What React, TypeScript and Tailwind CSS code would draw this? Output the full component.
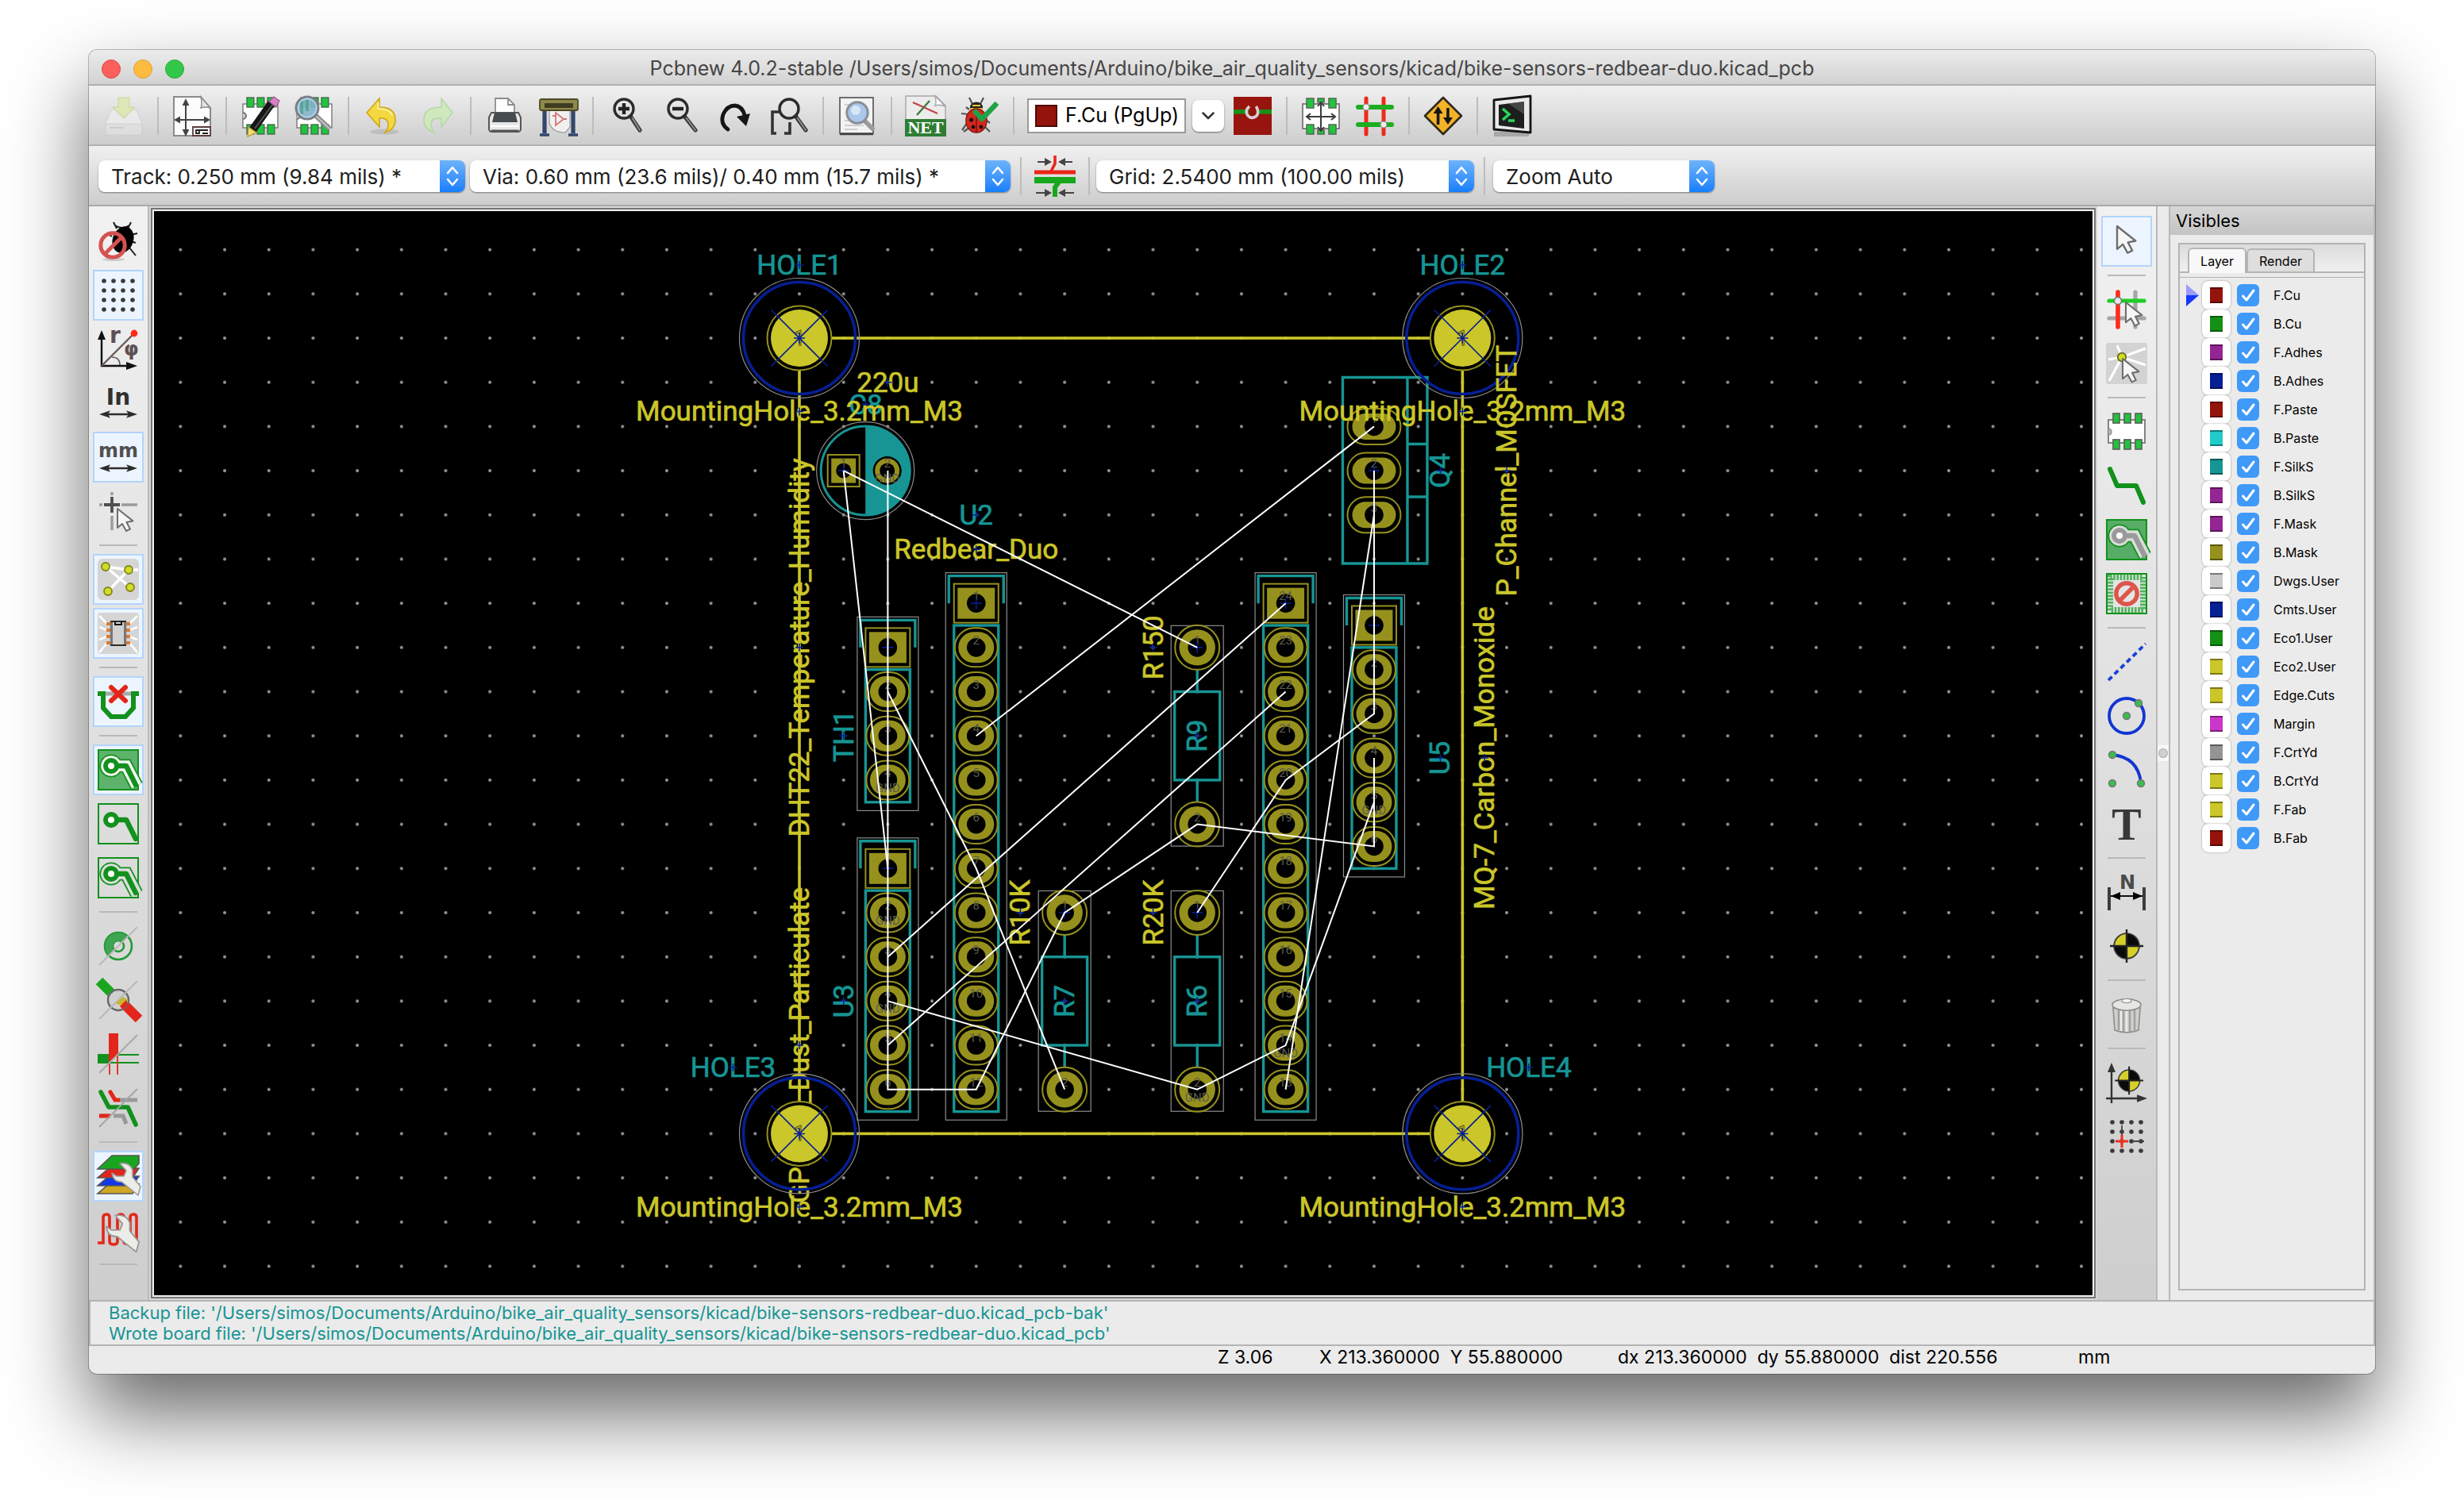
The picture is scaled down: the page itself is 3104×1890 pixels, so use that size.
import React from "react";

/* ------------------------------------------------------------------ */
/* Icons (26-unit grid)                                                 */
/* ------------------------------------------------------------------ */

function Icon({ children }: { children: React.ReactNode }) {
  return (
    <svg viewBox="0 0 26 26" className="size-13 shrink-0 overflow-visible" fill="none" aria-hidden="true">
      {children}
    </svg>
  );
}

const Magnifier = ({ cx = 9.5, cy = 8.5, r = 6, dx = 21 }: { cx?: number; cy?: number; r?: number; dx?: number }) => (
  <>
    <path d={`M${cx + r * 0.7} ${cy + r * 0.8}L${dx} 22`} stroke="#3a3a3a" strokeWidth="2.6" strokeLinecap="round" />
    <path d={`M${cx + r * 0.9} ${cy + r}L${dx} 22`} stroke="#8d8d8d" strokeWidth="1" strokeLinecap="round" />
    <circle cx={cx} cy={cy} r={r} stroke="#2c2c2c" strokeWidth="1.7" />
  </>
);

const BoardOutline = () => (
  <>
    <rect x="2" y="5.5" width="22" height="15" fill="#fff" stroke="#777" strokeWidth=".7" />
    <path d="M2 11a2 2 0 0 1 0 4" stroke="#777" fill="#ccc" />
    {[4.5, 11, 17.5].map((x) => (
      <g key={x} fill="#1fc43c" stroke="#466b4a" strokeWidth=".7">
        <rect x={x} y="1.5" width="4.4" height="6" />
        <rect x={x} y="18.5" width="4.4" height="6" />
      </g>
    ))}
  </>
);

const SaveIcon = () => (
  <Icon>
    <g opacity=".75">
      <path d="M5 9h16l3.500 9v6q0 1-1 1h-21q-1 0-1-1v-6z" fill="#eeeeee" stroke="#d2d2d2" strokeWidth=".6" />
      <path d="M1.500 18h23v6q0 1-1 1h-21q-1 0-1-1z" fill="#e2e2e2" stroke="#cdcdcd" strokeWidth=".6" />
      <path d="M4 20.500h9" stroke="#cacaca" />
      <path d="M9.500 1.500h7v6h3.500l-7 7-7-7h3.500z" fill="#dbe9a8" stroke="#c9d79a" strokeWidth=".7" />
    </g>
  </Icon>
);
const PageIcon = () => (
  <Icon>
    <path d="M1.500 1h17l6 7v17.500h-23z" fill="#fcfcfc" stroke="#8b8b8b" strokeWidth="1" />
    <path d="M18.500 1q1 5 0 7 3-1 6 0z" fill="#e3e3e3" stroke="#8b8b8b" strokeWidth=".7" />
    <path d="M9 4v20M3 15.500h20" stroke="#444" strokeWidth="1" />
    <path d="M9 2l-2.200 4.500h4.400zM9 26l-2.200-4.500h4.400zM1.500 15.500l4-2.200v4.400zM24.500 15.500l-4-2.200v4.400z" fill="#444" />
    <path d="M13.500 20h11v5.500h-11z" fill="#fff" stroke="#5b3c3c" strokeWidth=".9" />
    <path d="M15.500 22h2v2h-2zM19.500 22h3.500M19.500 24h3.500M17.500 22h2" stroke="#222" strokeWidth=".9" />
  </Icon>
);
const EditBoardIcon = () => (
  <Icon>
    <BoardOutline />
    <path d="M8 22L20 5" stroke="#161616" strokeWidth="5" />
    <path d="M9.500 21L21 5.500" stroke="#555" strokeWidth="1" />
    <path d="M18.500 4l3-3 3.500 2.500-2 4z" fill="#d97fc3" stroke="#9a5c8c" strokeWidth=".6" />
    <path d="M5.500 20l5 3.500-5.500 2.500z" fill="#f2dd74" stroke="#b59a2e" strokeWidth=".6" />
  </Icon>
);
const ViewBoardIcon = () => (
  <Icon>
    <BoardOutline />
    <path d="M14 13l8.500 8" stroke="#8d8d8d" strokeWidth="3.200" />
    <path d="M14 13l8.500 8" stroke="#c3c3c3" strokeWidth="1" />
    <circle cx="8.500" cy="8" r="7" fill="#7fb2c6" fillOpacity=".9" stroke="#7b7f86" strokeWidth="1.500" />
    <path d="M5 4v8M8.500 3v7" stroke="#4c9c86" strokeWidth="2" opacity=".7" />
    <circle cx="8.500" cy="8" r="5.800" stroke="#b7d7ef" strokeWidth=".8" />
  </Icon>
);
const UndoIcon = () => (
  <Icon>
    <ellipse cx="14" cy="23" rx="9" ry="1.800" fill="#000" opacity=".1" />
    <path d="M11 2v5.500q10 0 10 8 0 6-6.500 8 2.500-3 2-6-.8-3.500-5.500-3v5.500L3 11z" fill="#f3d83f" stroke="#cfa71c" strokeWidth=".8" />
    <path d="M10.200 4.500v4q7 0 9 4" stroke="#fbf0a4" strokeWidth="1" />
  </Icon>
);
const RedoIcon = () => (
  <Icon>
    <g transform="translate(26 0) scale(-1 1)" opacity=".8">
      <path d="M10 2v5.500q11 0 11 8 0 6-6.500 8 2.500-3 2-6-.8-3.500-6.500-3v5.500L3 11z" fill="#cdebb6" stroke="#acd79b" strokeWidth=".8" />
    </g>
  </Icon>
);
const PrintIcon = () => (
  <Icon>
    <path d="M7 12V2h8l4 4v6z" fill="#fdfdfd" stroke="#8d8d8d" strokeWidth=".9" />
    <path d="M15 2v4h4" stroke="#8d8d8d" strokeWidth=".9" />
    <path d="M4.500 11h17l1.500 3v7q0 2-2 2H5q-2 0-2-2v-7z" fill="#e7e7e7" stroke="#575757" />
    <path d="M6.500 11h13l1.500 6H5z" fill="#474c50" />
    <path d="M4 19.500h18" stroke="#fff" />
    <path d="M4.500 22.500h17" stroke="#555" strokeWidth="1.600" />
  </Icon>
);
const PlotIcon = () => (
  <Icon>
    <path d="M4 9v15M22 9v15" stroke="#33456b" strokeWidth="2.600" />
    <path d="M1 25h6M19 25h6" stroke="#33456b" strokeWidth="1.800" />
    <path d="M7 8h13v12l-3 3.500q-8 0-10-6z" fill="#f1f1f1" stroke="#a5a5a5" strokeWidth=".7" />
    <rect x="1" y="2.500" width="24" height="7" rx="1" fill="#8e8a4b" stroke="#4d4b24" strokeWidth=".9" />
    <rect x="4" y="5" width="18" height="3" fill="#3f3d20" />
    <path d="M11 11v8l5-4zM9 13h2M16 15h2" stroke="#d57474" strokeWidth=".9" />
  </Icon>
);
const ZoomInIcon = () => (
  <Icon>
    <Magnifier cx={11} />
    <path d="M11 5v7M7.500 8.500h7" stroke="#222" strokeWidth="2.200" />
  </Icon>
);
const ZoomOutIcon = () => (
  <Icon>
    <Magnifier cx={11} dx={22} />
    <path d="M7.500 8.500h7" stroke="#222" strokeWidth="2.200" />
  </Icon>
);
const RedrawIcon = () => (
  <Icon>
    <path d="M8.500 21.500Q3.500 18 5.500 12 8 6.500 13 6.500q4.500.5 6 6" stroke="#151515" strokeWidth="2.400" strokeLinecap="round" />
    <path d="M14 13.500l8.500-2-2.500 8z" fill="#151515" />
  </Icon>
);
const ZoomFitIcon = () => (
  <Icon>
    <path d="M5 24H2.500V10.500H8M10 24h3.500v-7" stroke="#333" strokeWidth="1.800" />
    <Magnifier cx={13} cy={8.5} r={6} dx={23.5} />
  </Icon>
);
const FindIcon = () => (
  <Icon>
    <rect x="2" y="1.500" width="21" height="22.500" fill="#f3f3f3" stroke="#6e6e6e" strokeWidth="1" />
    <path d="M2 24.500h21" stroke="#444" strokeWidth="1.200" />
    <path d="M5 6h4M5 16h3M5 19h12M5 21.500h8" stroke="#cfcfcf" />
    <path d="M17.500 16l5 5" stroke="#9b9b9b" strokeWidth="3" strokeLinecap="round" />
    <circle cx="13" cy="11" r="6.600" fill="#a9c8ea" stroke="#8a8f96" strokeWidth="1.500" />
    <circle cx="12" cy="9.500" r="3" fill="#e3effa" opacity=".8" />
  </Icon>
);
const NetIcon = () => (
  <Icon>
    <path d="M.5.500h19l6 6V25.500H.500z" fill="#ececec" stroke="#a6a6a6" strokeWidth=".7" />
    <path d="M19 .500q1 4 0 6 3-1 6.500.5z" fill="#fff" stroke="#a6a6a6" strokeWidth=".7" />
    <path d="M5 4.500l15.500 7" stroke="#c94545" strokeWidth="1.200" />
    <path d="M15.500 3.500L7.500 12.500" stroke="#3d7a3d" strokeWidth="1.200" />
    <rect x="0" y="15" width="26" height="11" fill="#2f7d34" />
    <text x="13" y="24" textAnchor="middle" fontSize="11" fontWeight="700" fill="#fff" fontFamily="'Liberation Serif', serif">NET</text>
  </Icon>
);
const BugCheckIcon = () => (
  <Icon>
    <path d="M9 6.500L6.500 1.500M13 6.500L15.500 1.500M6 12l-4.500-.5M5.500 17L2 22M7 20l-4 3M15.500 19l4 4M16.500 15l3 2.500M6.500 9L4.500 7.500" stroke="#555" strokeWidth="1.100" />
    <ellipse cx="11" cy="7.500" rx="4" ry="3.200" fill="#222" />
    <path d="M8.500 6.500h5M7.500 8.500h7" stroke="#e8c832" strokeWidth="1.100" />
    <ellipse cx="11" cy="16" rx="6.600" ry="7.600" fill="#d6261c" stroke="#7a1510" strokeWidth=".6" />
    <path d="M11 9v14.500" stroke="#571010" strokeWidth=".6" />
    <circle cx="7.800" cy="15.500" r="1.300" fill="#111" />
    <circle cx="9" cy="20" r="1.200" fill="#111" />
    <circle cx="14" cy="20" r="1.200" fill="#111" />
    <path d="M9.500 9.500l5 5.500L24 5" stroke="#1fa347" strokeWidth="3.200" strokeLinejoin="round" />
  </Icon>
);
const LayerPairIcon = () => (
  <Icon>
    <rect x="1" y="1" width="24" height="24" fill="#98140e" />
    <rect x="1" y="9" width="24" height="2.800" fill="#169218" />
    <circle cx="13" cy="10.500" r="2.600" fill="#98140e" />
    <path d="M11 7q-3 2.500-1.300 5.500 2.300 3 5.500.8 2.300-2.300 0-6.300" stroke="#dccbd2" strokeWidth="1.800" />
  </Icon>
);
const FootprintModeIcon = () => (
  <Icon>
    <rect x="1.500" y="5.500" width="23" height="15.500" fill="#fff" stroke="#777" strokeWidth=".9" />
    <g fill="#1fc43c" stroke="#5b6b5c" strokeWidth=".8">
      <rect x="4" y="2" width="4.500" height="6" />
      <rect x="11" y="2" width="4" height="2.500" />
      <rect x="18" y="2" width="4.500" height="6" />
      <rect x="4" y="18.500" width="4.500" height="6" />
      <rect x="11" y="22" width="4" height="2.500" />
      <rect x="18" y="18.500" width="4.500" height="6" />
    </g>
    <path d="M13 5v17M4 13.500h18M11 7l2-2.500L15 7M11 20l2 2.500 2-2.500M6.500 11.500L4 13.500l2.500 2M19.500 11.500l2.500 2-2.500 2" stroke="#3c3c3c" strokeWidth="1" />
  </Icon>
);
const TrackModeIcon = () => (
  <Icon>
    <path d="M7.500 2v22.500M18.500 2v22.500" stroke="#ee2a1c" strokeWidth="2.500" strokeLinecap="round" />
    <path d="M2.500 7.500h21M2.500 18.500h21" stroke="#1cae20" strokeWidth="3" strokeLinecap="round" />
    <circle cx="7.500" cy="7.500" r="2" fill="#eee" stroke="#888" strokeWidth=".6" />
    <circle cx="18.500" cy="18.500" r="2" fill="#eee" stroke="#888" strokeWidth=".6" />
  </Icon>
);
const AutorouteIcon = () => (
  <Icon>
    <path d="M13 1.500L24.500 13 13 24.500 1.500 13z" fill="#f4b22a" stroke="#2f2a1c" strokeWidth="1.300" strokeLinejoin="round" />
    <path d="M9.800 18.500v-9M16 8v8" stroke="#161616" strokeWidth="1.800" />
    <path d="M9.800 7l-3 4.500h6zM16 18.500l-3-4.500h6z" fill="#161616" />
  </Icon>
);
const ConsoleIcon = () => (
  <Icon>
    <path d="M2 23h22v3H2z" fill="#8c8c8c" opacity=".6" />
    <path d="M2 3L25 .500V23.500L2 21.500z" fill="#e9e9e9" stroke="#151515" strokeWidth="1.400" strokeLinejoin="round" />
    <path d="M5 6L21 4v17L5 19z" fill="#1c1f1e" />
    <path d="M11 5.300L21 4v8z" fill="#5d6361" opacity=".6" />
    <path d="M7.500 8.500l4 3.500-4 3.500M11 16h4" stroke="#2bd65a" strokeWidth="1.800" />
  </Icon>
);
const AutoTrackWidthIcon = () => (
  <Icon>
    <path d="M2 4h7M24 4h-7M1 23.500h8M25 23.500h-8" stroke="#444" strokeWidth="1" />
    <path d="M6.500 1.500l4.500 2.500-4.500 2.500zM19.500 1.500L15 4l4.500 2.500zM6.500 21l4.500 2.500L6.500 26zM19.500 21L15 23.500l4.500 2.500z" fill="#444" />
    <path d="M13 0v5l-2.500 5" stroke="#ea2517" strokeWidth="1.800" />
    <path d="M0 10.500h26" stroke="#ea2517" strokeWidth="2.400" />
    <path d="M0 15.500h26" stroke="#17a71d" strokeWidth="4" />
    <path d="M16 16l-3 4v6" stroke="#17a71d" strokeWidth="3" />
  </Icon>
);

/* left bar */
const DrcOffIcon = () => (
  <Icon>
    <path d="M12 5l-2-4M19 5l2-4M21 9l4-1M21 13l3 1M20 17l4 5M11 3q4 3 9 0M9 10l-3-2" stroke="#1c1c1c" strokeWidth="1" />
    <ellipse cx="16" cy="12" rx="6.500" ry="8.500" transform="rotate(20 16 12)" fill="#000" />
    <ellipse cx="10" cy="24.500" rx="7" ry="1" fill="#000" opacity=".15" />
    <circle cx="9.500" cy="15.500" r="7.600" stroke="#d65252" strokeWidth="2.500" />
    <path d="M4.500 21L15 10.500" stroke="#d65252" strokeWidth="2.500" />
  </Icon>
);
const GridDots = () => (
  <>
    {[4, 10, 16, 22].map((y) => [4, 10, 16, 22].map((x) => <circle key={`${x}-${y}`} cx={x} cy={y} r="1.400" fill="#3a3a3a" />))}
  </>
);
const GridIcon = () => <Icon><GridDots /></Icon>;
const PolarIcon = () => (
  <Icon>
    <path d="M2.500 4v19.500H21" stroke="#111" strokeWidth="1.200" />
    <path d="M2.500 1L0 7h5zM25 23.500L18 21v5z" fill="#111" />
    <path d="M2.500 23.500L22 4" stroke="#6a5a5a" strokeWidth="1.200" />
    <path d="M9 18q5 0 5 5" stroke="#6a5a5a" strokeWidth=".8" />
    <circle cx="23" cy="3" r="2.200" fill="#ff2a1c" />
    <text x="7.500" y="9" fontSize="14" fontWeight="700" fill="#5f5052" fontFamily="'DejaVu Sans', sans-serif">r</text>
    <text x="16.500" y="17" fontSize="12" fontWeight="700" fill="#5f5052" fontFamily="'DejaVu Sans', sans-serif">φ</text>
  </Icon>
);
const UnitArrow = () => (
  <>
    <path d="M4 20h18" stroke="#2c2c2c" strokeWidth="1.200" />
    <path d="M1 20l7-2.400-1.500 2.400L8 22.400zM25 20l-7-2.400 1.500 2.400-1.500 2.400z" fill="#2c2c2c" />
  </>
);
const InchIcon = () => (
  <Icon>
    <text x="13" y="14" textAnchor="middle" fontSize="14" fontWeight="700" fill="#303030" fontFamily="'DejaVu Sans', sans-serif">In</text>
    <UnitArrow />
  </Icon>
);
const MmIcon = () => (
  <Icon>
    <text x="13" y="13" textAnchor="middle" fontSize="12" fontWeight="700" fill="#505050" fontFamily="'DejaVu Sans', sans-serif">mm</text>
    <UnitArrow />
  </Icon>
);
const CursorArrow = ({ x = 12, y = 11, s = 1 }: { x?: number; y?: number; s?: number }) => (
  <path
    transform={`translate(${x} ${y}) scale(${s})`}
    d="M0 0v12l3-2.500 2.500 4.500 2.500-1.200-2.300-4.300 4-.8z"
    fill="#f6f6f6"
    stroke="#6e6e6e"
    strokeWidth="1"
    strokeLinejoin="round"
  />
);
const CursorShapeIcon = () => (
  <Icon>
    <path d="M1 9h2M15 9h10M9 1v2M9 16v9" stroke="#9b9b9b" strokeWidth="1.700" />
    <path d="M4 9h10M9 4v10" stroke="#505050" strokeWidth="1.900" />
    <CursorArrow x={12.5} y={11.5} />
  </Icon>
);
const RatsnestIcon = () => (
  <Icon>
    <rect width="26" height="26" rx="3" fill="#d5d5d5" />
    <path d="M5 5l15.500 13M5 5l14.500 2h6M6.500 20.500L19.500 7" stroke="#fff" strokeWidth="1.700" />
    {[[5, 5], [19.500, 7], [6.500, 20.500], [20.500, 18]].map(([x, y]) => (
      <circle key={x} cx={x} cy={y} r="2.500" fill="#d3dc27" stroke="#7f861b" strokeWidth=".9" />
    ))}
  </Icon>
);
const ModuleRatsnestIcon = () => (
  <Icon>
    <rect width="26" height="26" rx="2" fill="#d5d5d5" />
    <path d="M6 7L1 2M6 11L1 9M6 15l-5 2M6 19l-5 6M20 7l5-5M20 11l5-2M20 15l5 2M20 19l5 6" stroke="#fff" strokeWidth="1.300" />
    {[7, 11, 15, 19].map((y) => (
      <path key={y} d={`M5.500 ${y}h3M17.500 ${y}h3`} stroke="#e07a2c" strokeWidth="2" />
    ))}
    <rect x="8.500" y="5.500" width="9" height="15" fill="#d2d2d2" stroke="#2c2c2c" strokeWidth="1" />
    <path d="M8.700 6v14M17.300 6v14" stroke="#777" strokeWidth="1.600" />
    <path d="M11 5.500v2h4v-2" stroke="#111" />
  </Icon>
);
const AutoDelTrackIcon = () => (
  <Icon>
    <path d="M3 8h20" stroke="#aaa" strokeWidth="2.500" />
    <path d="M0 8h3.500v9l5 5.500h9l5-5.500V8H26" stroke="#12911c" strokeWidth="3" />
    <path d="M8.500 4l9 8.500M17.500 4l-9 8.500" stroke="#e3261b" strokeWidth="3" strokeLinecap="round" />
  </Icon>
);
const ZoneTrack = ({ halo, fill }: { halo?: string; fill: string }) => (
  <>
    {halo && (
      <>
        <path d="M9 10.500h9L24.500 23" stroke="#12911c" strokeWidth="8.600" />
        <circle cx="8.500" cy="10.500" r="7.300" fill="#12911c" />
        <path d="M9 10.500h9L24.500 23" stroke={halo} strokeWidth="6.800" />
        <circle cx="8.500" cy="10.500" r="6.400" fill={halo} />
      </>
    )}
    <path d="M9 10.500h9l6 12" stroke={fill} strokeWidth="3.200" strokeLinecap="round" strokeLinejoin="round" />
    <circle cx="8.500" cy="10.500" r="3.500" fill="#fff" stroke={fill} strokeWidth="3" />
  </>
);
const ZoneFrame = ({ bg }: { bg: string }) => <rect x=".5" y=".5" width="25" height="25" fill={bg} stroke="#12911c" strokeWidth="1" />;
const ZoneFilledIcon = () => <Icon><ZoneFrame bg="#5db36c" /><ZoneTrack halo="#f2f8f2" fill="#12911c" /></Icon>;
const ZoneHiddenIcon = () => <Icon><ZoneFrame bg="none" /><ZoneTrack fill="#12911c" /></Icon>;
const ZoneOutlineIcon = () => <Icon><ZoneFrame bg="none" /><ZoneTrack halo="#dedede" fill="#12911c" /></Icon>;
const Slash = ({ c = "#b9b9b9" }: { c?: string }) => <path d="M1 25L25 1" stroke={c} strokeWidth="1" />;
const PadSketchIcon = () => (
  <Icon>
    <circle cx="13" cy="13" r="8.500" stroke="#239a35" strokeWidth="1.300" />
    <circle cx="13" cy="13" r="3.500" stroke="#239a35" strokeWidth="1.300" />
    <path d="M7 19A8.500 8.500 0 0 1 19 7l-3.500 3.500a3.500 3.500 0 0 0-5 5z" fill="#3fa551" />
    <Slash />
  </Icon>
);
const ViaSketchIcon = () => (
  <Icon>
    <path d="M1 1l10 10" stroke="#1aa51f" strokeWidth="6" />
    <path d="M14 13l12 12" stroke="#e3261b" strokeWidth="6" />
    <circle cx="13" cy="13" r="6.500" fill="#d0d0d0" stroke="#686868" strokeWidth="1.200" />
    <path d="M11 15l5-4 3 2-3 4z" fill="#c8b72a" />
    <path d="M14 17l4-4 1 3-3 3z" fill="#e3261b" />
    <Slash />
  </Icon>
);
const TrackSketchIcon = () => (
  <Icon>
    <path d="M0 13.500h26M0 18.500h26" stroke="#12911c" strokeWidth="1" />
    <rect y="13" width="7" height="6" fill="#12911c" />
    <path d="M7.500 0v26M12.500 0v26" stroke="#e3372c" strokeWidth="1" />
    <path d="M7 0h6v13l-6 6z" fill="#e3261b" />
    <Slash c="#a9a9a9" />
  </Icon>
);
const HighContrastIcon = () => (
  <Icon>
    <path d="M8 3l3 5h3" stroke="#e3261b" strokeWidth="2.600" strokeLinecap="round" />
    <path d="M14 8h11M10 18h6l2 5" stroke="#999" strokeWidth="2.600" />
    <path d="M1 18h7" stroke="#e3261b" strokeWidth="2.600" />
    <path d="M2 3l5 9.500h12l5 11" stroke="#12911c" strokeWidth="2.800" strokeLinecap="round" strokeLinejoin="round" />
    <Slash c="#a5a5a5" />
  </Icon>
);
const Wrench = () => (
  <path
    d="M14 5q6-1 8 4v4.500l5 6-1.500 5.500-10.500-8.500q-5 .5-6-5.500l3 2h4.500l1.500-3.500z"
    fill="#ecece9"
    stroke="#9a9a96"
    strokeWidth=".8"
    strokeLinejoin="round"
  />
);
const LayerManagerIcon = () => (
  <Icon>
    <path d="M7 18L0 24h22l4-6z" fill="#d0a625" stroke="#555" strokeWidth=".8" />
    <path d="M7 13l-7 6h22l4-6z" fill="#1238e8" stroke="#555" strokeWidth=".8" />
    <path d="M7 8l-7 6h22l4-6z" fill="#e3261b" stroke="#555" strokeWidth=".8" />
    <path d="M9 0L0 8.500h23L26 5V0z" fill="#1aa51f" stroke="#555" strokeWidth=".8" />
    <Wrench />
  </Icon>
);
const MicrowaveIcon = () => (
  <Icon>
    <path d="M0 21h3.500V5q0-2 2-2t2 2v15q0 2 2.500 2t2.500-2V5q0-2 2-2t2 2v15q0 1.500 1.500 1.500T20.500 20V5q0-2 2-2t2 2v17" stroke="#e3261b" strokeWidth="1.800" />
    <g transform="translate(-5 -2) scale(1.150)"><Wrench /></g>
  </Icon>
);

/* right bar */
const ArrowIcon = () => <Icon><CursorArrow x={7} y={3.5} s={1.2} /></Icon>;
const HighlightNetIcon = () => (
  <Icon>
    <path d="M18.500 2v22M2 18.500h22" stroke="#a5a5a5" strokeWidth="2.600" strokeLinecap="round" />
    <path d="M7.500 2v22" stroke="#ff2a1c" strokeWidth="2.800" strokeLinecap="round" />
    <path d="M2 7.500h22" stroke="#1fce24" strokeWidth="2.600" strokeLinecap="round" />
    <circle cx="7.500" cy="7.500" r="2.300" fill="#e8e8e8" stroke="#777" strokeWidth=".8" />
    <CursorArrow x={12.5} y={8.5} s={1.05} />
  </Icon>
);
const LocalRatsnestIcon = () => (
  <Icon>
    <rect width="26" height="26" rx="1.500" fill="#d3d3d3" />
    <path d="M10 9L2 24M10 9L1.500 10.500M10 9L7 1.500M10 9l15-5.500M10 9l15 5" stroke="#fff" strokeWidth="1.600" />
    <circle cx="10" cy="9" r="2.600" fill="#d3dc27" stroke="#6f7620" />
    <CursorArrow x={10.5} y={10} s={1.05} />
  </Icon>
);
const AddFootprintIcon = () => (
  <Icon>
    <rect x="1.500" y="5.500" width="23" height="14.500" fill="#fff" stroke="#777" strokeWidth=".9" />
    <path d="M1.500 11q2 0 2 2t-2 2z" fill="#bbb" stroke="#888" strokeWidth=".6" />
    {[4.500, 11.500, 18.500].map((x) => (
      <g key={x} fill="#1fc43c" stroke="#5b6b5c" strokeWidth=".9">
        <rect x={x} y="1.500" width="4" height="6" />
        <rect x={x} y="18" width="4" height="6" />
      </g>
    ))}
  </Icon>
);
const AddTrackIcon = () => (
  <Icon>
    <path d="M2.500 2.500L7 13h12l4.500 10.500" stroke="#12911c" strokeWidth="3" strokeLinecap="round" strokeLinejoin="round" />
  </Icon>
);
const AddZoneIcon = () => <Icon><ZoneFrame bg="#57ad66" /><ZoneTrack halo="#dcdcdc" fill="#9a9a9a" /></Icon>;
const KeepoutIcon = () => (
  <Icon>
    <rect x="2.500" y="2.500" width="21" height="21" fill="#e4e4e4" stroke="#4fb35d" strokeWidth="4" strokeDasharray="1.300 .8" />
    <rect x=".5" y=".5" width="25" height="25" stroke="#12911c" />
    <circle cx="13" cy="13" r="6.600" stroke="#dc564c" strokeWidth="2.700" />
    <path d="M8.500 17.500l9-9" stroke="#dc564c" strokeWidth="2.700" />
  </Icon>
);
const DashedLineIcon = () => (
  <Icon>
    <path d="M1.500 24.500L25 1.500" stroke="#1b40d8" strokeWidth="1.900" strokeDasharray="3.200 2.200" />
  </Icon>
);
const Node = ({ x, y }: { x: number; y: number }) => <circle cx={x} cy={y} r="2.200" fill="#35c04a" stroke="#777" strokeWidth=".8" />;
const CircleIcon = () => (
  <Icon>
    <circle cx="13" cy="13" r="11" stroke="#1135d3" strokeWidth="1.900" />
    <Node x={13} y={13} />
    <Node x={20.5} y={5} />
  </Icon>
);
const ArcIcon = () => (
  <Icon>
    <path d="M4 3.500Q20 5 22 21" stroke="#1135d3" strokeWidth="1.900" />
    <Node x={4} y={3.5} />
    <Node x={4} y={21.5} />
    <Node x={22} y={21.5} />
  </Icon>
);
const TextIcon = () => (
  <Icon>
    <text x="13" y="23" textAnchor="middle" fontSize="28" fontWeight="700" fill="#383838" fontFamily="'Liberation Serif', serif">T</text>
  </Icon>
);
const DimensionIcon = () => (
  <Icon>
    <path d="M2 10v14.500M24 10v14.500" stroke="#3c3c3c" strokeWidth="2" />
    <path d="M3 15.500h20" stroke="#111" />
    <path d="M3 15.500l6-2.500v5zM23 15.500L17 13v5z" fill="#000" />
    <text x="13.500" y="11" textAnchor="middle" fontSize="12" fontWeight="700" fill="#4a4a4a" fontFamily="'DejaVu Sans', sans-serif">N</text>
  </Icon>
);
const TargetShape = () => (
  <>
    <circle cx="13" cy="13" r="8" fill="#0a0a0a" stroke="#444" strokeWidth=".8" />
    <path d="M13 13H5.500A7.500 7.500 0 0 1 13 5.500zM13 13h7.500A7.500 7.500 0 0 1 13 20.500z" fill="#d6cf2a" />
    <path d="M13 2.500v21M2.500 13h21" stroke="#222" strokeWidth="1.200" />
  </>
);
const TargetIcon = () => <Icon><TargetShape /></Icon>;
const TrashIcon = () => (
  <Icon>
    <path d="M4.500 9l1 14q7.500 3 15 0l1-14z" fill="#cfd0cd" stroke="#8c8d89" strokeWidth=".8" />
    <path d="M8 10v13M11 11v13M15 11v13M18 10v13" stroke="#a1a29e" strokeWidth="1.200" />
    <path d="M9.500 10.500v13M13 11v13" stroke="#eeeeec" />
    <ellipse cx="13" cy="7" rx="9" ry="3.600" fill="#e6e7e4" stroke="#8c8d89" strokeWidth=".8" />
    <ellipse cx="13" cy="4.500" rx="3" ry="1.300" fill="#f8f8f8" stroke="#979893" strokeWidth=".7" />
  </Icon>
);
const OriginIcon = () => (
  <Icon>
    <path d="M3.500 4v22M0 23h21" stroke="#333" strokeWidth="1.200" />
    <path d="M3.500.500L1 6.500h5zM26 23l-6.500-2.400v4.800z" fill="#333" />
    <g transform="translate(3.500 .7) scale(.85)"><TargetShape /></g>
  </Icon>
);
const GridOriginIcon = () => (
  <Icon>
    <GridDots />
    <path d="M10 6v14M16 16h8" stroke="#444" strokeWidth=".9" />
    <path d="M10 12v8M6 16h8" stroke="#ee3226" strokeWidth="1.600" />
  </Icon>
);

/* ------------------------------------------------------------------ */
/* Toolbars                                                             */
/* ------------------------------------------------------------------ */

type Tool = { label: string; icon: () => React.JSX.Element; on?: boolean };
type Group = Tool[];

function ToolButton({ label, icon: I, on }: Tool) {
  return (
    <button
      type="button"
      aria-label={label}
      title={label}
      className={
        on
          ? "m-0.5 flex size-16 shrink-0 items-center justify-center border-2 border-[#b3d4fb] bg-[#ecf5ff]"
          : "m-0.5 flex size-16 shrink-0 items-center justify-center border-2 border-transparent"
      }
    >
      <I />
    </button>
  );
}

const VSep = () => <div className="mx-2 h-12 w-0.5 shrink-0 bg-[#bdbdbd]" />;
const HSep = () => <div className="my-2 h-0.5 w-12 shrink-0 bg-[#b9b9b9]" />;

function Groups({ groups, vertical }: { groups: Group[]; vertical?: boolean }) {
  return (
    <>
      {groups.map((g, i) => (
        <React.Fragment key={i}>
          {i > 0 && (vertical ? <HSep /> : <VSep />)}
          {g.map((t) => (
            <ToolButton key={t.label} {...t} />
          ))}
        </React.Fragment>
      ))}
    </>
  );
}

const mainGroups: Group[] = [
  [{ label: "Save board", icon: SaveIcon }],
  [{ label: "Page settings", icon: PageIcon }],
  [{ label: "Open footprint editor", icon: EditBoardIcon }, { label: "Open footprint viewer", icon: ViewBoardIcon }],
  [{ label: "Undo", icon: UndoIcon }, { label: "Redo", icon: RedoIcon }],
  [{ label: "Print board", icon: PrintIcon }, { label: "Plot", icon: PlotIcon }],
  [
    { label: "Zoom in", icon: ZoomInIcon },
    { label: "Zoom out", icon: ZoomOutIcon },
    { label: "Redraw view", icon: RedrawIcon },
    { label: "Zoom auto", icon: ZoomFitIcon },
  ],
  [{ label: "Find", icon: FindIcon }],
  [{ label: "Read netlist", icon: NetIcon }, { label: "Design rules check", icon: BugCheckIcon }],
];

const modeGroups: Group[] = [
  [{ label: "Select layer pair", icon: LayerPairIcon }],
  [{ label: "Footprint mode", icon: FootprintModeIcon }, { label: "Track mode", icon: TrackModeIcon }],
  [{ label: "FreeRoute", icon: AutorouteIcon }],
  [{ label: "Scripting console", icon: ConsoleIcon }],
];

const leftGroups: Group[] = [
  [
    { label: "Enable design rule checking", icon: DrcOffIcon },
    { label: "Hide grid", icon: GridIcon, on: true },
    { label: "Polar coordinates", icon: PolarIcon },
    { label: "Units in inches", icon: InchIcon },
    { label: "Units in millimeters", icon: MmIcon, on: true },
    { label: "Change cursor shape", icon: CursorShapeIcon },
  ],
  [
    { label: "Show board ratsnest", icon: RatsnestIcon, on: true },
    { label: "Show footprint ratsnest", icon: ModuleRatsnestIcon, on: true },
  ],
  [{ label: "Automatic track deletion", icon: AutoDelTrackIcon, on: true }],
  [
    { label: "Show filled areas", icon: ZoneFilledIcon, on: true },
    { label: "Hide filled areas", icon: ZoneHiddenIcon },
    { label: "Show outlines of filled areas", icon: ZoneOutlineIcon },
  ],
  [
    { label: "Pads in outline mode", icon: PadSketchIcon },
    { label: "Vias in outline mode", icon: ViaSketchIcon },
    { label: "Tracks in outline mode", icon: TrackSketchIcon },
    { label: "High contrast mode", icon: HighContrastIcon },
  ],
  [
    { label: "Layers manager", icon: LayerManagerIcon, on: true },
    { label: "Microwave tools", icon: MicrowaveIcon },
  ],
  [],
];

const rightGroups: Group[] = [
  [{ label: "Select", icon: ArrowIcon, on: true }],
  [{ label: "Highlight net", icon: HighlightNetIcon }, { label: "Local ratsnest", icon: LocalRatsnestIcon }],
  [
    { label: "Add footprints", icon: AddFootprintIcon },
    { label: "Add tracks and vias", icon: AddTrackIcon },
    { label: "Add filled zones", icon: AddZoneIcon },
    { label: "Add keepout areas", icon: KeepoutIcon },
  ],
  [
    { label: "Add graphic line", icon: DashedLineIcon },
    { label: "Add graphic circle", icon: CircleIcon },
    { label: "Add graphic arc", icon: ArcIcon },
    { label: "Add text", icon: TextIcon },
  ],
  [{ label: "Add dimension", icon: DimensionIcon }, { label: "Add layer alignment target", icon: TargetIcon }],
  [{ label: "Delete items", icon: TrashIcon }],
  [{ label: "Set drill origin", icon: OriginIcon }, { label: "Set grid origin", icon: GridOriginIcon }],
];

function PopUp({ label, value, className }: { label: string; value: string; className: string }) {
  return (
    <div className={`relative h-10 shrink-0 ${className}`}>
      <select
        aria-label={label}
        className="h-10 w-full appearance-none rounded-lg bg-white pl-4 text-[26px] text-[#1d1d1d] shadow-[0_1px_2px_rgba(0,0,0,0.45)]"
      >
        <option>{value}</option>
      </select>
      <div className="pointer-events-none absolute inset-y-0 right-0 flex w-8 items-center justify-center rounded-r-lg bg-linear-to-b from-[#6cb3fa] to-[#157efb]">
        <svg viewBox="0 0 16 28" className="h-7 w-4" fill="none" stroke="#fff" strokeWidth="2.500" strokeLinecap="round" strokeLinejoin="round" aria-hidden="true">
          <path d="M2 10l6-7 6 7M2 18l6 7 6-7" />
        </svg>
      </div>
    </div>
  );
}

/* ------------------------------------------------------------------ */
/* Board                                                                */
/* ------------------------------------------------------------------ */

const U = 55.69;
const EDGE = "#cbc629";
const PAD = "#96911c";
const SILK = "#169594";
const BLUE = "#051f94";
const CRTYD = "#8c8c8c";

function Cross({ x, y, r = 5 }: { x: number; y: number; r?: number }) {
  return <path d={`M${x - r} ${y}h${2 * r}M${x} ${y - r}v${2 * r}`} stroke={BLUE} strokeWidth="1.500" />;
}

function Label({ x, y, text, color, vertical }: { x: number; y: number; text: string; color: string; vertical?: boolean }) {
  const px = x * U;
  const py = y * U;
  return (
    <g>
      <text
        x={px}
        y={py + 12}
        textAnchor="middle"
        fontSize="35"
        fill={color}
        stroke={color}
        strokeWidth=".7"
        transform={vertical ? `rotate(-90 ${px} ${py})` : undefined}
      >
        {text}
      </text>
      <Cross x={px} y={py} />
    </g>
  );
}

function PadText({ x, y, name, net }: { x: number; y: number; name: string; net?: string }) {
  return (
    <g fontSize="15" fill="#5c5b4e" textAnchor="middle">
      <text x={x} y={y - 4}>{name}</text>
      {net && <text x={x} y={y + 15}>{net}</text>}
    </g>
  );
}

function Hole({ x, y }: { x: number; y: number }) {
  return (
    <g transform={`translate(${x * U} ${y * U})`} fill="none">
      <circle r="75.500" stroke={CRTYD} strokeWidth="1.200" />
      <circle r="70.500" stroke={BLUE} strokeWidth="3.600" />
      <circle r="40.500" stroke={PAD} strokeWidth="2" fill="#000" />
      <circle r="36" fill={EDGE} />
      <text y="9" textAnchor="middle" fontSize="25" stroke="#55531c" strokeWidth="1">1</text>
      <path d="M-35.500-35.500l71 71M35.500-35.500l-71 71" stroke={BLUE} strokeWidth="1.700" />
      <Cross x={0} y={0} r={7} />
    </g>
  );
}

function Header({ x, y, names, nets = {} }: { x: number; y: number; names: string[]; nets?: Record<number, string> }) {
  const n = names.length;
  return (
    <g transform={`translate(${x * U} ${y * U})`} fill="none">
      <rect x="-38.500" y="-38.500" width="77" height={(n - 1) * U + 77} stroke={CRTYD} strokeWidth="1.200" />
      <path d="M-34.500 0v-34.500h69V0" stroke={SILK} strokeWidth="3.400" />
      <rect x="-28" y={U / 2} width="56" height={(n - 1) * U} stroke={SILK} strokeWidth="3.400" />
      {names.map((name, i) => (
        <g key={name}>
          {i === 0 ? (
            <>
              <rect x="-28" y="-24.500" width="56" height="49" stroke={PAD} strokeWidth="2" />
              <rect x="-23.500" y="-19.500" width="47" height="39" fill={PAD} />
            </>
          ) : (
            <>
              <rect x="-27" y={i * U - 24.5} width="54" height="49" rx="24.500" stroke={PAD} strokeWidth="2" />
              <rect x="-22.500" y={i * U - 19.5} width="45" height="39" rx="19.500" fill={PAD} />
            </>
          )}
          <circle cy={i * U} r="11.800" fill="#000" />
          <PadText x={0} y={i * U} name={name} net={nets[i]} />
        </g>
      ))}
      <Cross x={0} y={0} r={7} />
    </g>
  );
}

function Resistor({ x, y, net }: { x: number; y: number; net?: string }) {
  return (
    <g transform={`translate(${x * U} ${y * U})`} fill="none">
      <rect x="-33" y="-27.500" width="66" height={4 * U + 55} stroke={CRTYD} strokeWidth="1.200" />
      <rect x="-28.500" y={U} width="57" height={2 * U} stroke={SILK} strokeWidth="3.400" />
      <path d={`M0 28V${U}M0 ${3 * U}V${4 * U - 28}`} stroke={SILK} strokeWidth="3.400" />
      {[0, 4].map((k) => (
        <g key={k}>
          <circle cy={k * U} r="28" stroke={PAD} strokeWidth="2" />
          <circle cy={k * U} r="22.700" fill={PAD} />
          <circle cy={k * U} r="11.800" fill="#000" />
          <PadText x={0} y={k * U} name={k === 0 ? "1" : "2"} net={k === 4 ? net : undefined} />
        </g>
      ))}
      <Cross x={0} y={0} r={7} />
    </g>
  );
}

function Mosfet({ x, y }: { x: number; y: number }) {
  return (
    <g transform={`translate(${x * U} ${y * U})`} fill="none">
      <path d="M-39.500-117.500h106.500v234.500H-39.500zM42-117.500v234.500M42-33.500h25M42 33h25" stroke={SILK} strokeWidth="3.400" />
      {[-1, 0, 1].map((k) => (
        <g key={k}>
          <rect x="-33.500" y={k * U - 22.5} width="67" height="45" rx="22.500" stroke={PAD} strokeWidth="2" />
          <rect x="-27.500" y={k * U - 16.5} width="55" height="33" rx="16.500" fill={PAD} />
          <circle cy={k * U} r="11.800" fill="#000" />
          <PadText x={0} y={k * U} name={String(k + 2)} />
        </g>
      ))}
      <Cross x={0} y={0} r={7} />
    </g>
  );
}

function Capacitor({ x, y }: { x: number; y: number }) {
  return (
    <g transform={`translate(${x * U} ${y * U})`} fill="none">
      <circle cx="27.500" r="61.500" stroke={CRTYD} strokeWidth="1.200" />
      <path d="M27.500-57a57 57 0 0 1 0 114z" fill={SILK} />
      <circle cx="27.500" r="56" stroke={SILK} strokeWidth="3" />
      <rect x="-20" y="-20" width="40" height="40" stroke={PAD} strokeWidth="2" />
      <rect x="-15.500" y="-15.500" width="31" height="31" fill={PAD} />
      <circle r="9.500" fill="#000" />
      <circle cx="55" r="18" fill="#000" />
      <circle cx="55" r="15.500" fill={PAD} />
      <circle cx="55" r="9.500" fill="#000" />
      <PadText x={0} y={0} name="1" />
      <PadText x={55} y={0} name="2" net="GND" />
      <Cross x={0} y={0} r={7} />
    </g>
  );
}

const ratsnest: [number, number][][] = [
  [[1, 3], [9, 7]],
  [[1, 3], [2, 12]],
  [[2, 3], [2, 17], [4, 17], [6, 13], [9, 11], [13, 11.5], [13, 9.5]],
  [[2, 8], [4, 12], [6, 17]],
  [[4, 9], [13, 2]],
  [[2, 14], [11, 6]],
  [[2, 16], [11, 8]],
  [[2, 15], [9, 17], [11, 16], [13, 10.5]],
  [[9, 13], [11, 10], [13, 8.5], [13, 3]],
  [[13, 4], [11, 17]],
];

const seq = (from: number, to: number) =>
  Array.from({ length: Math.abs(to - from) + 1 }, (_, i) => String(from + (to > from ? i : -i)));

function Board() {
  return (
    <svg
      viewBox="-813 -160 2442 1366"
      preserveAspectRatio="xMidYMid slice"
      className="absolute inset-0 size-full bg-black font-[Roboto,sans-serif]"
      role="img"
      aria-label="Board layout"
    >
      <defs>
        <pattern id="grid-dots" x={-U / 2} y={-U / 2} width={U} height={U} patternUnits="userSpaceOnUse">
          <circle cx={U / 2} cy={U / 2} r="2" fill="#9a9a9a" />
        </pattern>
      </defs>
      <rect x="-1500" y="-1500" width="4500" height="4500" fill="url(#grid-dots)" />

      <Header x={4} y={6} names={seq(1, 12)} />
      <Header x={11} y={6} names={seq(24, 13)} nets={{ 10: "GND" }} />
      <Header x={2} y={7} names={seq(1, 4)} nets={{ 3: "GND" }} />
      <Header x={2} y={12} names={seq(1, 6)} nets={{ 1: "GND", 3: "GND" }} />
      <Header x={13} y={6.5} names={seq(1, 6)} nets={{ 4: "GND" }} />
      <Resistor x={9} y={7} />
      <Resistor x={9} y={13} net="GND" />
      <Resistor x={6} y={13} />
      <Capacitor x={1} y={3} />
      <Mosfet x={13} y={3} />

      <rect width={15 * U} height={18 * U} fill="none" stroke={EDGE} strokeWidth="3.600" />

      <Label x={0} y={-1.65} text="HOLE1" color={SILK} />
      <Label x={15} y={-1.65} text="HOLE2" color={SILK} />
      <Label x={-1.5} y={16.5} text="HOLE3" color={SILK} />
      <Label x={16.5} y={16.5} text="HOLE4" color={SILK} />
      <Label x={1.5} y={1.5} text="C8" color={SILK} />
      <Label x={4} y={4} text="U2" color={SILK} />
      <Label x={1} y={9} text="TH1" color={SILK} vertical />
      <Label x={1} y={15} text="U3" color={SILK} vertical />
      <Label x={14.5} y={3} text="Q4" color={SILK} vertical />
      <Label x={14.5} y={9.5} text="U5" color={SILK} vertical />
      <Label x={9} y={9} text="R9" color={SILK} vertical />
      <Label x={9} y={15} text="R6" color={SILK} vertical />
      <Label x={6} y={15} text="R7" color={SILK} vertical />

      <Label x={0} y={7} text="DHT22_Temperature_Humidity" color={EDGE} vertical />
      <Label x={0} y={16} text="GP2Y10_Dust_Particulate" color={EDGE} vertical />
      <Hole x={0} y={0} />
      <Hole x={15} y={0} />
      <Hole x={0} y={18} />
      <Hole x={15} y={18} />
      <Label x={0} y={1.66} text="MountingHole_3.2mm_M3" color={EDGE} />
      <Label x={15} y={1.66} text="MountingHole_3.2mm_M3" color={EDGE} />
      <Label x={0} y={19.66} text="MountingHole_3.2mm_M3" color={EDGE} />
      <Label x={15} y={19.66} text="MountingHole_3.2mm_M3" color={EDGE} />
      <Label x={2} y={1} text="220u" color={EDGE} />
      <Label x={4} y={4.78} text="Redbear_Duo" color={EDGE} />
      <Label x={8} y={7} text="R150" color={EDGE} vertical />
      <Label x={8} y={13} text="R20K" color={EDGE} vertical />
      <Label x={5} y={13} text="R10K" color={EDGE} vertical />
      <Label x={16} y={3} text="P_Channel_MOSFET" color={EDGE} vertical />
      <Label x={15.5} y={9.5} text="MQ-7_Carbon_Monoxide" color={EDGE} vertical />

      <g fill="none" stroke="#fff" strokeWidth="2">
        {ratsnest.map((pts, i) => (
          <polyline key={i} points={pts.map(([a, b]) => `${a * U},${b * U}`).join(" ")} />
        ))}
      </g>
    </svg>
  );
}

/* ------------------------------------------------------------------ */
/* Layer manager                                                        */
/* ------------------------------------------------------------------ */

const layers: { name: string; color: string }[] = [
  { name: "F.Cu", color: "#94140c" },
  { name: "B.Cu", color: "#149115" },
  { name: "F.Adhes", color: "#942593" },
  { name: "B.Adhes", color: "#051f94" },
  { name: "F.Paste", color: "#94140c" },
  { name: "B.Paste", color: "#20cbca" },
  { name: "F.SilkS", color: "#169594" },
  { name: "B.SilkS", color: "#942593" },
  { name: "F.Mask", color: "#942593" },
  { name: "B.Mask", color: "#96911c" },
  { name: "Dwgs.User", color: "#cacaca" },
  { name: "Cmts.User", color: "#051f94" },
  { name: "Eco1.User", color: "#149115" },
  { name: "Eco2.User", color: "#cbc629" },
  { name: "Edge.Cuts", color: "#cbc629" },
  { name: "Margin", color: "#cb35ca" },
  { name: "F.CrtYd", color: "#949494" },
  { name: "B.CrtYd", color: "#cbc629" },
  { name: "F.Fab", color: "#cbc629" },
  { name: "B.Fab", color: "#94140c" },
];

function LayerRow({ name, color, current }: { name: string; color: string; current?: boolean }) {
  return (
    <li className="flex h-9 items-center">
      <span className="flex w-7 justify-end pr-1">
        {current && (
          <svg viewBox="0 0 16 28" className="h-7 w-4" aria-label="Current layer">
            <path d="M0 0l16 14H0z" fill="#9a9bfb" />
            <path d="M0 28l16-14H0z" fill="#1437fa" />
          </svg>
        )}
      </span>
      <button
        type="button"
        aria-label={`${name} colour`}
        className="flex size-9 shrink-0 items-center justify-center rounded-lg bg-white shadow-[0_0_2px_rgba(0,0,0,0.45)]"
      >
        <span className="h-5 w-4 border-y-2 border-black/40" style={{ backgroundColor: color }} />
      </button>
      <label className="ml-2 flex items-center gap-[18px]">
        <span className="grid size-7">
          <input type="checkbox" defaultChecked className="col-start-1 row-start-1 size-7 appearance-none rounded-md bg-[#3f99f8]" />
          <svg viewBox="0 0 28 28" className="pointer-events-none col-start-1 row-start-1 size-7" fill="none" stroke="#fff" strokeWidth="3" strokeLinecap="round" strokeLinejoin="round" aria-hidden="true">
            <path d="M7.500 15l4.500 5 9-12" />
          </svg>
        </span>
        <span className="text-base text-black">{name}</span>
      </label>
    </li>
  );
}

function Visibles() {
  return (
    <aside className="flex w-65 shrink-0 flex-col border-x-2 border-[#b9b9b9] bg-[#ebebeb]">
      <h2 className="flex h-9 items-center bg-linear-to-b from-[#d6d6d6] to-[#c4c4c4] pl-[7px] text-[22px] text-black">Visibles</h2>
      <div className="mx-2.5 mt-2.5 mb-3 flex flex-1 flex-col border-2 border-[#b4b4b4]">
        <div role="tablist" className="flex h-9 items-end border-b-2 border-[#b4b4b4] bg-linear-to-b from-[#dcdcdc] to-[#f0f0f0] pl-2.5 text-base text-black">
          <button role="tab" aria-selected="true" type="button" className="-mb-0.5 h-8 w-[74px] rounded-t-md border-2 border-b-0 border-[#b4b4b4] bg-[#f8f8f8]">
            Layer
          </button>
          <button role="tab" aria-selected="false" type="button" className="h-[29px] w-[86px] rounded-t-md border-2 border-b-0 border-[#b4b4b4] bg-[#dedede]">
            Render
          </button>
        </div>
        <div className="h-1.5 border-b border-[#b4b4b4]" />
        <ul className="pt-1">
          {layers.map((l, i) => (
            <LayerRow key={l.name} {...l} current={i === 0} />
          ))}
        </ul>
      </div>
    </aside>
  );
}

/* ------------------------------------------------------------------ */

export default function App() {
  return (
    <div className="flex min-h-screen flex-col bg-white px-28 pt-[63px] pb-[159px] font-[Inter,sans-serif]">
      <main className="flex flex-1 flex-col overflow-hidden rounded-[10px] bg-[#ebebeb] shadow-[0_0_0_1px_rgba(0,0,0,0.25),0_50px_100px_rgba(0,0,0,0.6)]">
        <header className="grid h-[45px] shrink-0 grid-cols-[1fr_auto_1fr] items-center border-b-2 border-[#b0b0b0] bg-linear-to-b from-[#ececec] to-[#d2d2d2] px-4 pt-1">
          <div className="flex gap-4">
            <button type="button" aria-label="Close" className="size-6 rounded-full border border-[#e2463f] bg-[#fc605c]" />
            <button type="button" aria-label="Minimize" className="size-6 rounded-full border border-[#e0a033] bg-[#fdbc40]" />
            <button type="button" aria-label="Zoom" className="size-6 rounded-full border border-[#27aa35] bg-[#34c84a]" />
          </div>
          <h1 className="text-[25px] whitespace-nowrap text-[#454545]">
            Pcbnew 4.0.2-stable /Users/simos/Documents/Arduino/bike_air_quality_sensors/kicad/bike-sensors-redbear-duo.kicad_pcb
          </h1>
        </header>

        <div role="toolbar" aria-label="Main" className="flex h-19 shrink-0 items-center border-b-2 border-[#b3b3b3] bg-linear-to-b from-[#f0f0f0] to-[#cdcdcd] pt-0.5 pl-2.5">
          <Groups groups={mainGroups} />
          <VSep />
          <div className="mr-0.5 ml-2 flex items-center gap-2">
            <div className="flex h-11 w-50 items-center gap-2.5 border-2 border-[#9a9a9a] bg-white pl-2">
              <span className="size-7 shrink-0 border-2 border-[#4d0905] bg-[#94140c]" />
              <input aria-label="Active layer" readOnly value="F.Cu (PgUp)" className="w-full min-w-0 bg-transparent text-[25px] text-black" />
            </div>
            <button type="button" aria-label="Choose layer" className="flex size-10 items-center justify-center rounded-lg bg-white shadow-[0_1px_2px_rgba(0,0,0,0.5)]">
              <svg viewBox="0 0 16 10" className="h-2.5 w-4" fill="none" stroke="#333" strokeWidth="2.500" strokeLinecap="round" strokeLinejoin="round" aria-hidden="true">
                <path d="M1.500 1.500L8 8l6.500-6.500" />
              </svg>
            </button>
          </div>
          <Groups groups={modeGroups} />
        </div>

        <div role="toolbar" aria-label="Auxiliary" className="flex h-19 shrink-0 items-center border-b-2 border-[#a9a9a9] bg-linear-to-b from-[#f0f0f0] to-[#cdcdcd] pt-0.5 pl-3">
          <PopUp label="Track width" value="Track: 0.250 mm (9.84 mils) *" className="mr-1.5 w-[462px]" />
          <PopUp label="Via size" value="Via: 0.60 mm (23.6 mils)/ 0.40 mm (15.7 mils) *" className="mr-1 w-[681px]" />
          <VSep />
          <ToolButton label="Auto track width" icon={AutoTrackWidthIcon} />
          <VSep />
          <PopUp label="Grid" value="Grid: 2.5400 mm (100.00 mils)" className="mr-1 w-[476px]" />
          <VSep />
          <PopUp label="Zoom" value="Zoom Auto" className="ml-0.5 w-[279px]" />
        </div>

        <div className="flex flex-1">
          <div role="toolbar" aria-label="Options" aria-orientation="vertical" className="flex w-19 shrink-0 flex-col items-center border-r-2 border-[#b9b9b9] bg-linear-to-b from-[#f1f1f1] to-[#cecece] pt-2.5">
            <Groups groups={leftGroups} vertical />
          </div>
          <div className="flex flex-1 bg-[#d6d6d6] p-0.5">
            <div className="flex flex-1 border-2 border-[#757575]">
              <div className="relative flex-1 border-2 border-[#f0f0f0] bg-black">
                <Board />
              </div>
            </div>
          </div>
          <div role="toolbar" aria-label="Tools" aria-orientation="vertical" className="flex w-19 shrink-0 flex-col items-center border-r-2 border-[#b9b9b9] bg-linear-to-b from-[#f1f1f1] to-[#cecece] pt-2.5">
            <Groups groups={rightGroups} vertical />
          </div>
          <div className="flex w-3.5 shrink-0 items-center justify-center bg-[#ebebeb]">
            <div className="flex h-5 w-3.5 items-center justify-center bg-[#f8f8f8]">
              <span className="size-3 rounded-full bg-[#cfcfcf] shadow-[inset_0_0_1px_1px_#b0b0b0]" />
            </div>
          </div>
          <Visibles />
        </div>

        <div className="h-[58px] shrink-0 border-2 border-[#b4b4b4] pt-px pl-[23px] text-[22px] leading-[26px] whitespace-nowrap text-[#169594]">
          <p>Backup file: '/Users/simos/Documents/Arduino/bike_air_quality_sensors/kicad/bike-sensors-redbear-duo.kicad_pcb-bak'</p>
          <p>Wrote board file: '/Users/simos/Documents/Arduino/bike_air_quality_sensors/kicad/bike-sensors-redbear-duo.kicad_pcb'</p>
        </div>

        <footer className="flex h-[35px] shrink-0 items-center justify-end pb-1.5 text-[23px] whitespace-pre text-black">
          <span className="w-[128px]">Z 3.06</span>
          <span className="w-[376px]">X 213.360000  Y 55.880000</span>
          <span className="w-[580px]">dx 213.360000  dy 55.880000  dist 220.556</span>
          <span className="w-[374px]">mm</span>
        </footer>
      </main>
    </div>
  );
}
